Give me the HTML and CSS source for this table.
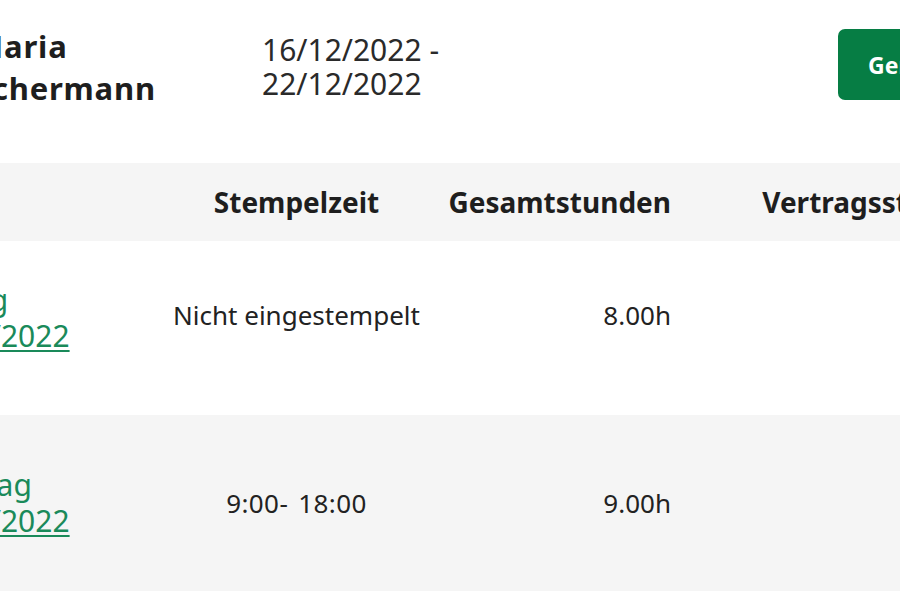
FILE: index.html
```html
<!DOCTYPE html>
<html lang="de">
<head>
<meta charset="utf-8">
<title>Stundenzettel</title>
<link rel="stylesheet" href="styles.css">
</head>
<body>
<div class="viewport">
  <div class="screen">
    <header class="summary">
      <div class="employee">Maria<br>Schermann</div>
      <div class="period">16/12/2022 -<br>22/12/2022</div>
      <button class="approve">Genehmigen</button>
    </header>
    <div class="table">
      <div class="row head">
        <div class="cell c1 head-c1">Tag</div>
        <div class="cell c2">Stempelzeit</div>
        <div class="cell c3">Gesamtstunden</div>
        <div class="cell c4">Vertragsstunden</div>
      </div>
      <div class="row first">
        <div class="cell c1"><span class="day">Freitag</span><a class="date" href="#">16/12/2022</a></div>
        <div class="cell c2">Nicht eingestempelt</div>
        <div class="cell c3">8.00h</div>
        <div class="cell c4">8.00h</div>
      </div>
      <div class="row alt">
        <div class="cell c1"><span class="day">Samstag</span><a class="date" href="#">17/12/2022</a></div>
        <div class="cell c2 span">9:00- 18:00</div>
        <div class="cell c3">9.00h</div>
        <div class="cell c4">8.00h</div>
      </div>
      <div class="row plain">
        <div class="cell c1"><span class="day">Sonntag</span><a class="date" href="#">18/12/2022</a></div>
        <div class="cell c2">Nicht eingestempelt</div>
        <div class="cell c3">0.00h</div>
        <div class="cell c4">0.00h</div>
      </div>
    </div>
  </div>
</div>
</body>
</html>
```
FILE: styles.css
```css
html, body {
  margin: 0;
  padding: 0;
  background: #ffffff;
}
body {
  font-family: "Noto Sans", "Liberation Sans", sans-serif;
  color: #222222;
}
.viewport {
  width: 900px;
  height: 600px;
  overflow: hidden;
}
.screen {
  width: 1250px;
  margin-left: -150px;
}
.summary {
  display: flex;
  align-items: flex-start;
  height: 163px;
  box-sizing: border-box;
  padding-top: 25px;
  padding-left: 124px;
}
.employee {
  flex: 0 0 288px;
  font-size: 31px;
  font-weight: 700;
  line-height: 42px;
  letter-spacing: 0.8px;
  color: #1e1e1e;
}
.period {
  flex: 0 0 576px;
  margin-top: 8px;
  font-size: 30px;
  line-height: 34px;
  color: #2a2a2a;
}
.approve {
  margin-top: 4px;
  height: 71px;
  padding: 0 30px;
  border: none;
  border-radius: 7px;
  background: #067d44;
  color: #ffffff;
  font-family: "Noto Sans", "Liberation Sans", sans-serif;
  font-size: 23px;
  font-weight: 700;
  white-space: nowrap;
}
.row {
  display: grid;
  grid-template-columns: 310px 273px 258px 326px;
  align-items: center;
  font-size: 26px;
  line-height: 36px;
}
.row.head {
  height: 78px;
  background: #f5f5f5;
  font-size: 28px;
  font-weight: 700;
  color: #1e1e1e;
}
.row.first {
  height: 174px;
  box-sizing: border-box;
  padding-bottom: 26px;
}
.row.alt {
  height: 176px;
  background: #f5f5f5;
}
.row.plain {
  height: 176px;
}
.cell.c1 {
  padding-left: 60px;
  display: flex;
  flex-direction: column;
  font-size: 30px;
  line-height: 36px;
  color: #1a8a5a;
}
.row.first .cell.c1 {
  margin-top: 6px;
}
.cell.head-c1 {
  font-size: 28px;
  color: #1e1e1e;
}
.cell.c2 {
  text-align: center;
  white-space: nowrap;
}
.cell.span {
  word-spacing: 3px;
  letter-spacing: 0.4px;
}
.cell.c3, .cell.c4 {
  text-align: right;
  padding-right: 20px;
  white-space: nowrap;
}
.day {
  color: #1a8a5a;
}
.date {
  color: #1a8a5a;
  text-decoration: underline;
  text-decoration-thickness: 1.5px;
  text-underline-offset: 3px;
}
```
